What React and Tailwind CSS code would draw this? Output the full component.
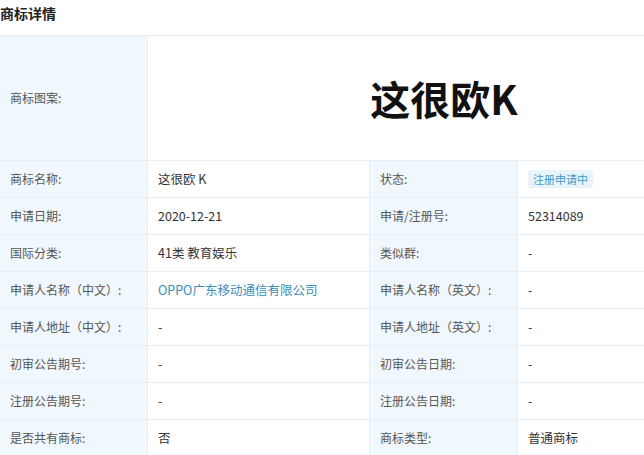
const FONT = { fontFamily: '"Microsoft YaHei", "Noto Sans CJK SC", "Liberation Sans", sans-serif' }

const ROWS = [
  ['商标名称:', '这很欧 K', '状态:', { badge: '注册申请中' }],
  ['申请日期:', '2020-12-21', '申请/注册号:', '52314089'],
  ['国际分类:', '41类 教育娱乐', '类似群:', '-'],
  ['申请人名称（中文）:', { href: 'OPPO广东移动通信有限公司' }, '申请人名称（英文）:', '-'],
  ['申请人地址（中文）:', '-', '申请人地址（英文）:', '-'],
  ['初审公告期号:', '-', '初审公告日期:', '-'],
  ['注册公告期号:', '-', '注册公告日期:', '-'],
  ['是否共有商标:', '否', '商标类型:', '普通商标'],
]

function Label({ children }) {
  return (
    <div className="w-[148px] shrink-0 bg-[#f1f8fd] border-r border-[#e6eef3] flex items-center pl-[10px] text-[12px] text-[#555]">
      {children}
    </div>
  )
}

function Value({ v }) {
  let body = v
  if (typeof v === 'object' && v.badge) {
    body = (
      <span className="inline-flex items-center h-[18px] px-[5px] rounded-[3px] bg-[#e8f3fa] text-[11px] text-[#3a9bc8]">
        {v.badge}
      </span>
    )
  } else if (typeof v === 'object' && v.href) {
    body = <span className="text-[#3a8db8]">{v.href}</span>
  }
  return (
    <div className="w-[222px] shrink-0 bg-white border-r border-[#e6eef3] flex items-center pl-[10px] text-[12.5px] text-[#333]">
      {body}
    </div>
  )
}

export default function App() {
  return (
    <div className="w-[644px] h-[455px] overflow-hidden bg-white" style={FONT}>
      <div className="h-[35px] pt-[5px] text-[14px] font-bold text-[#222] leading-[17px]">商标详情</div>
      <div className="w-[740px] border-t border-[#e6eef3]">
        <div className="flex h-[125px] border-b border-[#e6eef3]">
          <Label>商标图案:</Label>
          <div className="flex-1 flex items-center justify-center bg-white">
            <span className="text-[40px] font-bold text-[#111] leading-none" style={{ fontFamily: '"Noto Sans CJK SC", "Liberation Sans", sans-serif' }}>
              这很欧K
            </span>
          </div>
        </div>
        {ROWS.map((r, i) => (
          <div key={i} className="flex h-[37px] border-b border-[#e6eef3]">
            <Label>{r[0]}</Label>
            <Value v={r[1]} />
            <Label>{r[2]}</Label>
            <Value v={r[3]} />
          </div>
        ))}
      </div>
    </div>
  )
}
